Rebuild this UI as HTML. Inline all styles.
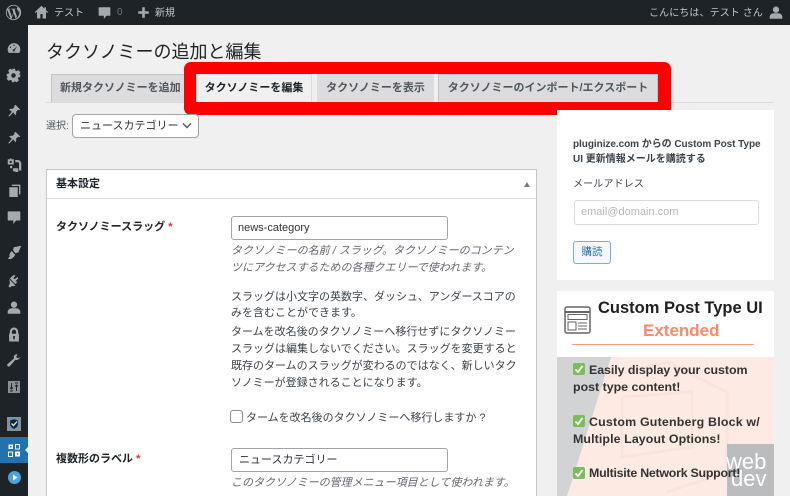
<!DOCTYPE html>
<html lang="ja"><head><meta charset="utf-8"><title>タクソノミーの追加と編集</title>
<style>
*{box-sizing:border-box}
html,body{margin:0;padding:0;height:496px;overflow:hidden}
body{width:790px;background:#f0f0f1;position:relative;font-family:"Liberation Sans","Noto Sans CJK JP",sans-serif;color:#3c434a;font-size:11px}
.a{position:absolute;white-space:nowrap;line-height:16px}
.ab{position:absolute;left:0;top:0;width:790px;height:25px;background:#1d2327}
.sb{position:absolute;left:0;top:25px;width:28px;height:471px;background:#1d2327}
.w{color:#c3c4c7;font-size:10px}
.tab{position:absolute;top:74px;height:28px;background:#dcdcde;border:1px solid #c3c4c7;border-bottom:0;font-weight:700;font-size:11px;line-height:27px;text-align:center;color:#50575e;white-space:nowrap}
.box{position:absolute;background:#fff}
.it{font-style:italic;color:#646970}
.inp{position:absolute;background:#fff;border:1px solid #a0a3a7;border-radius:3px;height:24px;line-height:23px;padding-left:6px;color:#2c3338;font-size:11px}
.ad{font-size:12.4px;font-weight:700;color:#333}
svg{position:absolute;display:block}
</style></head><body>

<div class="ab"></div>
<div class="sb"></div>

<svg style="left:5px;top:4px" width="17" height="17" viewBox="0 0 20 20" fill="#a7aaad"><path d="M10 1a9 9 0 1 0 0 18 9 9 0 0 0 0-18zM2 10c0-1.200.3-2.300.7-3.300l3.800 10.500A8 8 0 0 1 2 10zm8 8c-.8 0-1.500-.1-2.300-.3l2.400-7 2.500 6.800A8 8 0 0 1 10 18zm1.100-11.700c.5 0 .9-.1.900-.1.400 0 .4-.7 0-.7 0 0-1.300.1-2.100.1s-2.100-.1-2.100-.1c-.5 0-.5.7-.1.700l.9.1 1.200 3.400-1.800 5.300-3-8.700.9-.1c.5 0 .4-.7 0-.7 0 0-1.300.1-2.100.1h-.5A8 8 0 0 1 15.400 4h-.1c-.8 0-1.300.7-1.300 1.400 0 .6.400 1.200.8 1.800.3.500.6 1.200.6 2.200 0 .7-.3 1.500-.6 2.600l-.8 2.700zM13 17l2.500-7c.4-1.100.6-1.900.6-2.700l-.1-.9A8 8 0 0 1 13 17z"/></svg>
<svg style="left:34px;top:5px" width="15" height="15" viewBox="0 0 20 20" fill="#a7aaad"><path d="M10 1 1 9.500l1 1L4 9v9h4.500v-6h3v6H16V9l2 1.500 1-1L16 7V3h-2v2z"/></svg>
<div class="a w" style="left:54px;top:6px">テスト</div>
<svg style="left:98px;top:6px" width="13" height="13" viewBox="0 0 20 20" fill="#a7aaad"><path d="M2 2h16a1 1 0 0 1 1 1v11a1 1 0 0 1-1 1h-5l-4 5v-5H2a1 1 0 0 1-1-1V3a1 1 0 0 1 1-1z"/></svg>
<div class="a" style="left:117px;top:5px;color:#72777c;font-size:10px">0</div>
<svg style="left:137px;top:6px" width="13" height="13" viewBox="0 0 20 20" fill="#a7aaad"><path d="M8 2h4v6h6v4h-6v6H8v-6H2V8h6z"/></svg>
<div class="a w" style="left:155px;top:6px">新規</div>
<div class="a w" style="left:649px;top:6px;letter-spacing:.1px">こんにちは、テスト さん</div>
<svg style="left:769px;top:5px" width="14" height="15" viewBox="0 0 20 20" fill="#a7aaad"><circle cx="10" cy="6" r="4.500"/><path d="M1 19v-3c0-3 3-5 6-5h6c3 0 6 2 6 5v3z"/></svg>

<!-- Sidebar icons -->
<svg style="left:7px;top:41px" width="14" height="14" viewBox="0 0 20 20" fill="#a7aaad"><path d="M10 3a9 9 0 0 0-9 9c0 2 .6 3.500 1.500 5h15c.9-1.500 1.500-3 1.500-5a9 9 0 0 0-9-9zm0 2a1 1 0 1 1 0 2 1 1 0 0 1 0-2zM5 8a1 1 0 1 1 0 2 1 1 0 0 1 0-2zm9.500-.5L11 13a1.500 1.500 0 1 1-1.500-1z"/></svg>
<svg style="left:6px;top:68px" width="15" height="15" viewBox="0 0 20 20" fill="#a7aaad"><path d="M8 1h4l.5 2.500 1.700.7 2.200-1.400 2.800 2.800-1.400 2.200.7 1.700L19 8v4l-2.500.5-.7 1.700 1.400 2.200-2.800 2.800-2.200-1.400-1.700.7L10 19H8l-.5-2.500-1.700-.7-2.200 1.400-2.800-2.800 1.400-2.200-.7-1.700L1 12V8l2.500-.5.7-1.700L2.800 3.600l2.800-2.800 2.200 1.400 1.700-.7zM10 7a3 3 0 1 0 0 6 3 3 0 0 0 0-6z"/></svg>
<svg style="left:7px;top:104px" width="14" height="14" viewBox="0 0 20 20" fill="#a7aaad"><path d="M12 1l7 7-2 1-1-1-3 3c.5 2 0 4-1 5l-3-4-6 6-1-1 5-6-4-3c1-1 3-1.500 5-1l3-3-1-1z"/></svg>
<svg style="left:7px;top:131px" width="14" height="14" viewBox="0 0 20 20" fill="#a7aaad"><path d="M12 1l7 7-2 1-1-1-3 3c.5 2 0 4-1 5l-3-4-6 6-1-1 5-6-4-3c1-1 3-1.500 5-1l3-3-1-1z"/></svg>
<svg style="left:7px;top:157px" width="15" height="15" viewBox="0 0 20 20" fill="#a7aaad"><path d="M5 1l1 2h3v7H1V3h3zM5 5a1.500 1.500 0 1 0 0 3 1.500 1.500 0 0 0 0-3zM11 4h3c3 0 5 2 5 5v9h-3V8c0-1-1-1-2-1h-3zM4 12h3v3H4zM8 15h7v4a2 2 0 0 1-4 0 2 2 0 0 1-3-1z"/></svg>
<svg style="left:8px;top:183px" width="13" height="15" viewBox="0 0 20 20" fill="#a7aaad"><path d="M6 1h13v15h-2V3H6z"/><path d="M2 5h13v15H2z"/></svg>
<svg style="left:7px;top:210px" width="14" height="14" viewBox="0 0 20 20" fill="#a7aaad"><path d="M2 2h16a1 1 0 0 1 1 1v11a1 1 0 0 1-1 1h-5l-4 5v-5H2a1 1 0 0 1-1-1V3a1 1 0 0 1 1-1z"/></svg>
<svg style="left:7px;top:245px" width="15" height="15" viewBox="0 0 20 20" fill="#a7aaad"><path d="M9 3l10-2-4 9-4 1-3-4zM6 8l5 5-2 3-4 3-4-1 3-3-1-1 1-3z"/></svg>
<svg style="left:7px;top:273px" width="14" height="15" viewBox="0 0 20 20" fill="#a7aaad"><path d="M3 8l9 9-2 1H7l-3 2-1-1-1-1 2-3v-3zM10 2l2 1-3 4 2 1 4-3 1 2-4 4 3 1-3 3-8-8z"/></svg>
<svg style="left:7px;top:300px" width="14" height="15" viewBox="0 0 20 20" fill="#a7aaad"><circle cx="10" cy="6" r="4.500"/><path d="M1 19v-3c0-3 3-5 6-5h6c3 0 6 2 6 5v3z"/></svg>
<svg style="left:7px;top:327px" width="14" height="15" viewBox="0 0 20 20" fill="#a7aaad"><path d="M4 9V6a6 6 0 0 1 12 0v3h1v11H3V9zm3 0h6V6a3 3 0 0 0-6 0zM10 12a1.500 1.500 0 0 0-1 2.600V17h2v-2.400A1.500 1.500 0 0 0 10 12z"/></svg>
<svg style="left:7px;top:353px" width="14" height="15" viewBox="0 0 20 20" fill="#a7aaad"><path d="M14 1c-3 0-5 3-4 6L1 15c-1 1-1 2 0 3s2 1 3 0l8-9c3 1 6-1 7-4l-3 2-3-2 2-3z"/></svg>
<svg style="left:8px;top:381px" width="12" height="12" viewBox="0 0 12 12"><rect width="12" height="12" fill="#8c8f94"/><path d="M3.500 2v6M2 6.500 3.500 8 5 6.500M2 10h3M8.500 10V4M7 5.500 8.500 4 10 5.500M7 2h3" stroke="#1d2327" stroke-width="1" fill="none"/></svg>
<svg style="left:7px;top:417px" width="14" height="14" viewBox="0 0 14 14"><rect width="14" height="14" fill="#8c8f94"/><path d="M7 1.500l4.500 1.500v4c0 2.500-2 4.500-4.500 5.500C4.500 11.500 2.500 9.500 2.500 7V3z" fill="#1d2327" stroke="#4a9fd6" stroke-width="1.200"/><path d="M4.500 6.500 6.500 8.500 10 4.500" stroke="#dfe6ea" stroke-width="1.300" fill="none"/></svg>

<div class="a" style="left:0;top:437px;width:28px;height:26px;background:#2271b1"></div>
<svg style="left:25px;top:446px" width="4" height="8" viewBox="0 0 4 8"><path d="M4 0v8L0 4z" fill="#f0f0f1"/></svg>
<svg style="left:8px;top:444px" width="12" height="13" viewBox="0 0 12 13"><rect x=".5" y=".5" width="4.500" height="4.500" fill="#fff"/><path d="M2 2h1.500v1.500H2z" fill="#2271b1"/><rect x="7.500" y=".5" width="4" height="4.500" fill="none" stroke="#fff"/><rect x=".5" y="8" width="4" height="4.500" fill="none" stroke="#fff"/><rect x="7" y="7.500" width="5" height="5" fill="#fff"/><path d="M8.800 9.300h1.500v1.500H8.800z" fill="#2271b1"/></svg>
<svg style="left:8px;top:471px" width="13" height="13" viewBox="0 0 13 13"><circle cx="6.500" cy="6.500" r="6.500" fill="#4aa3e0"/><path d="M5 3.500 9.500 6.500 5 9.500z" fill="#fff"/></svg>

<!-- Title -->
<div class="a" style="left:46px;top:39px;font-size:18px;line-height:26px;color:#1d2327">タクソノミーの追加と編集</div>

<!-- Tabs -->
<div class="a" style="left:46px;top:102px;width:728px;height:1px;background:#dcdcde"></div>
<div class="tab" style="left:51px;width:139px;text-align:left;padding-left:8px">新規タクソノミーを追加</div>

<!-- Red highlight -->
<div class="a" style="left:184px;top:62px;width:487px;height:53px;background:#f00;border-radius:7px"></div>
<div class="a" style="left:196px;top:74px;width:462px;height:28px;background:#f0f0f1"></div>
<div class="tab" style="left:196px;width:116px;height:28px;background:#f0f0f1;color:#1d2327;border-color:#dcdcde">タクソノミーを編集</div>
<div class="tab" style="left:317px;width:117px;border-color:#dcdcde">タクソノミーを表示</div>
<div class="tab" style="left:438px;width:220px;border-color:#c3c4c7">タクソノミーのインポート/エクスポート</div>

<!-- Select -->
<div class="a" style="left:46px;top:119px;font-size:10px;color:#50575e">選択:</div>
<div class="inp" style="left:72px;top:114px;width:127px;padding-left:7px;border-radius:4px">ニュースカテゴリー</div>
<div class="a" style="left:179px;top:116px;width:18px;height:20px;background:#fff"></div>
<svg style="left:182px;top:122px" width="10" height="7" viewBox="0 0 10 7"><path d="M1 1.500 5 5.500 9 1.500" stroke="#50575e" stroke-width="1.500" fill="none"/></svg>

<!-- Main panel -->
<div class="box" style="left:46px;top:169px;width:491px;height:327px;border:1px solid #c3c4c7;border-bottom:0"></div>
<div class="a" style="left:47px;top:198px;width:489px;height:1px;background:#dcdcde"></div>
<div class="a" style="left:56px;top:176px;font-weight:700;font-size:11px;color:#1d2327">基本設定</div>
<svg style="left:524px;top:182px" width="6" height="5" viewBox="0 0 6 5"><path d="M3 0 6 5H0z" fill="#787c82"/></svg>

<div class="a" style="left:56px;top:219px;font-weight:700;color:#1d2327">タクソノミースラッグ <span style="color:#d63638">*</span></div>
<div class="inp" style="left:231px;top:216px;width:217px">news-category</div>
<div class="a it" style="left:231px;top:243px">タクソノミーの名前 / スラッグ。タクソノミーのコンテン</div>
<div class="a it" style="left:231px;top:260px">ツにアクセスするための各種クエリーで使われます。</div>

<div class="a" style="left:231px;top:289px">スラッグは小文字の英数字、ダッシュ、アンダースコアの</div>
<div class="a" style="left:231px;top:305px">みを含むことができます。</div>
<div class="a" style="left:231px;top:324px">タームを改名後のタクソノミーへ移行せずにタクソノミー</div>
<div class="a" style="left:231px;top:341px">スラッグは編集しないでください。スラッグを変更すると</div>
<div class="a" style="left:231px;top:358px">既存のタームのスラッグが変わるのではなく、新しいタク</div>
<div class="a" style="left:231px;top:375px">ソノミーが登録されることになります。</div>

<div class="a" style="left:230px;top:410px;width:13px;height:13px;border:1px solid #8c8f94;border-radius:3px;background:#fff"></div>
<div class="a" style="left:246px;top:410px">タームを改名後のタクソノミーへ移行しますか ?</div>

<div class="a" style="left:56px;top:451px;font-weight:700;color:#1d2327">複数形のラベル <span style="color:#d63638">*</span></div>
<div class="inp" style="left:231px;top:448px;width:217px;padding-left:7px">ニュースカテゴリー</div>
<div class="a it" style="left:231px;top:475px">このタクソノミーの管理メニュー項目として使われます。</div>

<!-- Right: subscribe -->
<div class="box" style="left:557px;top:110px;width:217px;height:170px"></div>
<div class="a" style="left:573px;top:137px;font-weight:700;font-size:10px;color:#3c434a;letter-spacing:-.05px">pluginize.com からの Custom Post Type</div>
<div class="a" style="left:573px;top:152px;font-weight:700;font-size:10px;color:#3c434a">UI 更新情報メールを購読する</div>
<div class="a" style="left:573px;top:177px;font-size:10px;color:#3c434a;letter-spacing:.15px">メールアドレス</div>
<div class="a" style="left:574px;top:200px;width:185px;height:25px;border:1px solid #dcdcde;border-radius:3px;background:#fff;padding-left:6px;line-height:23px;color:#b4b7ba;font-size:11px">email@domain.com</div>
<div class="a" style="left:573px;top:241px;width:38px;height:23px;border:1px solid #72aee6;border-radius:3px;background:#f6f7f7;color:#2271b1;font-size:10.500px;line-height:21px;text-align:center">購読</div>

<!-- Right: ad -->
<div class="box" style="left:557px;top:291px;width:217px;height:205px;overflow:hidden">
<svg style="left:0;top:66px" width="217" height="139" viewBox="0 0 217 139"><rect width="217" height="139" fill="#fdeae3"/><path d="M0 0h54L10 139H0z" fill="#d2d3d5"/><g fill="none" stroke="#f8e4dd" stroke-width="3"><path d="M50 20l60-15 60 30v80l-60 20"/><path d="M65 40l70-5v55l-70 10z"/></g><rect x="170" y="87" width="47" height="52" fill="#bbbcbe"/></svg>
<svg style="left:7px;top:15px" width="27" height="28" viewBox="0 0 27 28"><rect x="1" y="1" width="25" height="26" rx="2" fill="#fff" stroke="#666" stroke-width="1.500"/><path d="M1 6h25" stroke="#666" stroke-width="2"/><rect x="4" y="8.500" width="19" height="5" fill="none" stroke="#666"/><rect x="4" y="16" width="8" height="8" fill="none" stroke="#666"/><path d="M14 17h9M14 20h9M14 23h9" stroke="#666"/></svg>
<div class="a" style="left:41px;top:6px;font-size:16.500px;line-height:22px;font-weight:700;color:#1f1f1f">Custom Post Type UI</div>
<div class="a" style="left:86px;top:30px;font-size:17px;line-height:20px;font-weight:700;color:#fb8a6d">Extended</div>
<div class="a" style="left:15px;top:53px;width:182px;height:1px;background:#fb9a80"></div>

<div class="a" style="left:16px;top:72px;width:12px;height:12px;background:#7bbd5c;border-radius:2px"></div>
<div class="a ad" style="left:32px;top:71px;letter-spacing:-.05px">Easily display your custom</div>
<div class="a ad" style="left:16px;top:88px">post type content!</div>
<div class="a" style="left:16px;top:124px;width:12px;height:12px;background:#7bbd5c;border-radius:2px"></div>
<div class="a ad" style="left:32px;top:123px;letter-spacing:.2px">Custom Gutenberg Block w/</div>
<div class="a ad" style="left:16px;top:140px;letter-spacing:.1px">Multiple Layout Options!</div>
<div class="a" style="left:16px;top:176px;width:12px;height:12px;background:#7bbd5c;border-radius:2px"></div>
<svg style="left:16px;top:72px" width="12" height="12" viewBox="0 0 12 12"><path d="M2.500 6.500 5 9 9.500 3" stroke="#fff" stroke-width="1.800" fill="none"/></svg>
<svg style="left:16px;top:124px" width="12" height="12" viewBox="0 0 12 12"><path d="M2.500 6.500 5 9 9.500 3" stroke="#fff" stroke-width="1.800" fill="none"/></svg>
<svg style="left:16px;top:176px" width="12" height="12" viewBox="0 0 12 12"><path d="M2.500 6.500 5 9 9.500 3" stroke="#fff" stroke-width="1.800" fill="none"/></svg>
<div class="a" style="left:169px;top:162px;font-size:22px;line-height:18px;color:#fff">web</div>
<div class="a" style="left:174px;top:179px;font-size:22px;line-height:18px;color:#fff">dev</div>
<div class="a ad" style="left:32px;top:174px;letter-spacing:-.25px">Multisite Network Support!</div>
</div>
</body></html>
